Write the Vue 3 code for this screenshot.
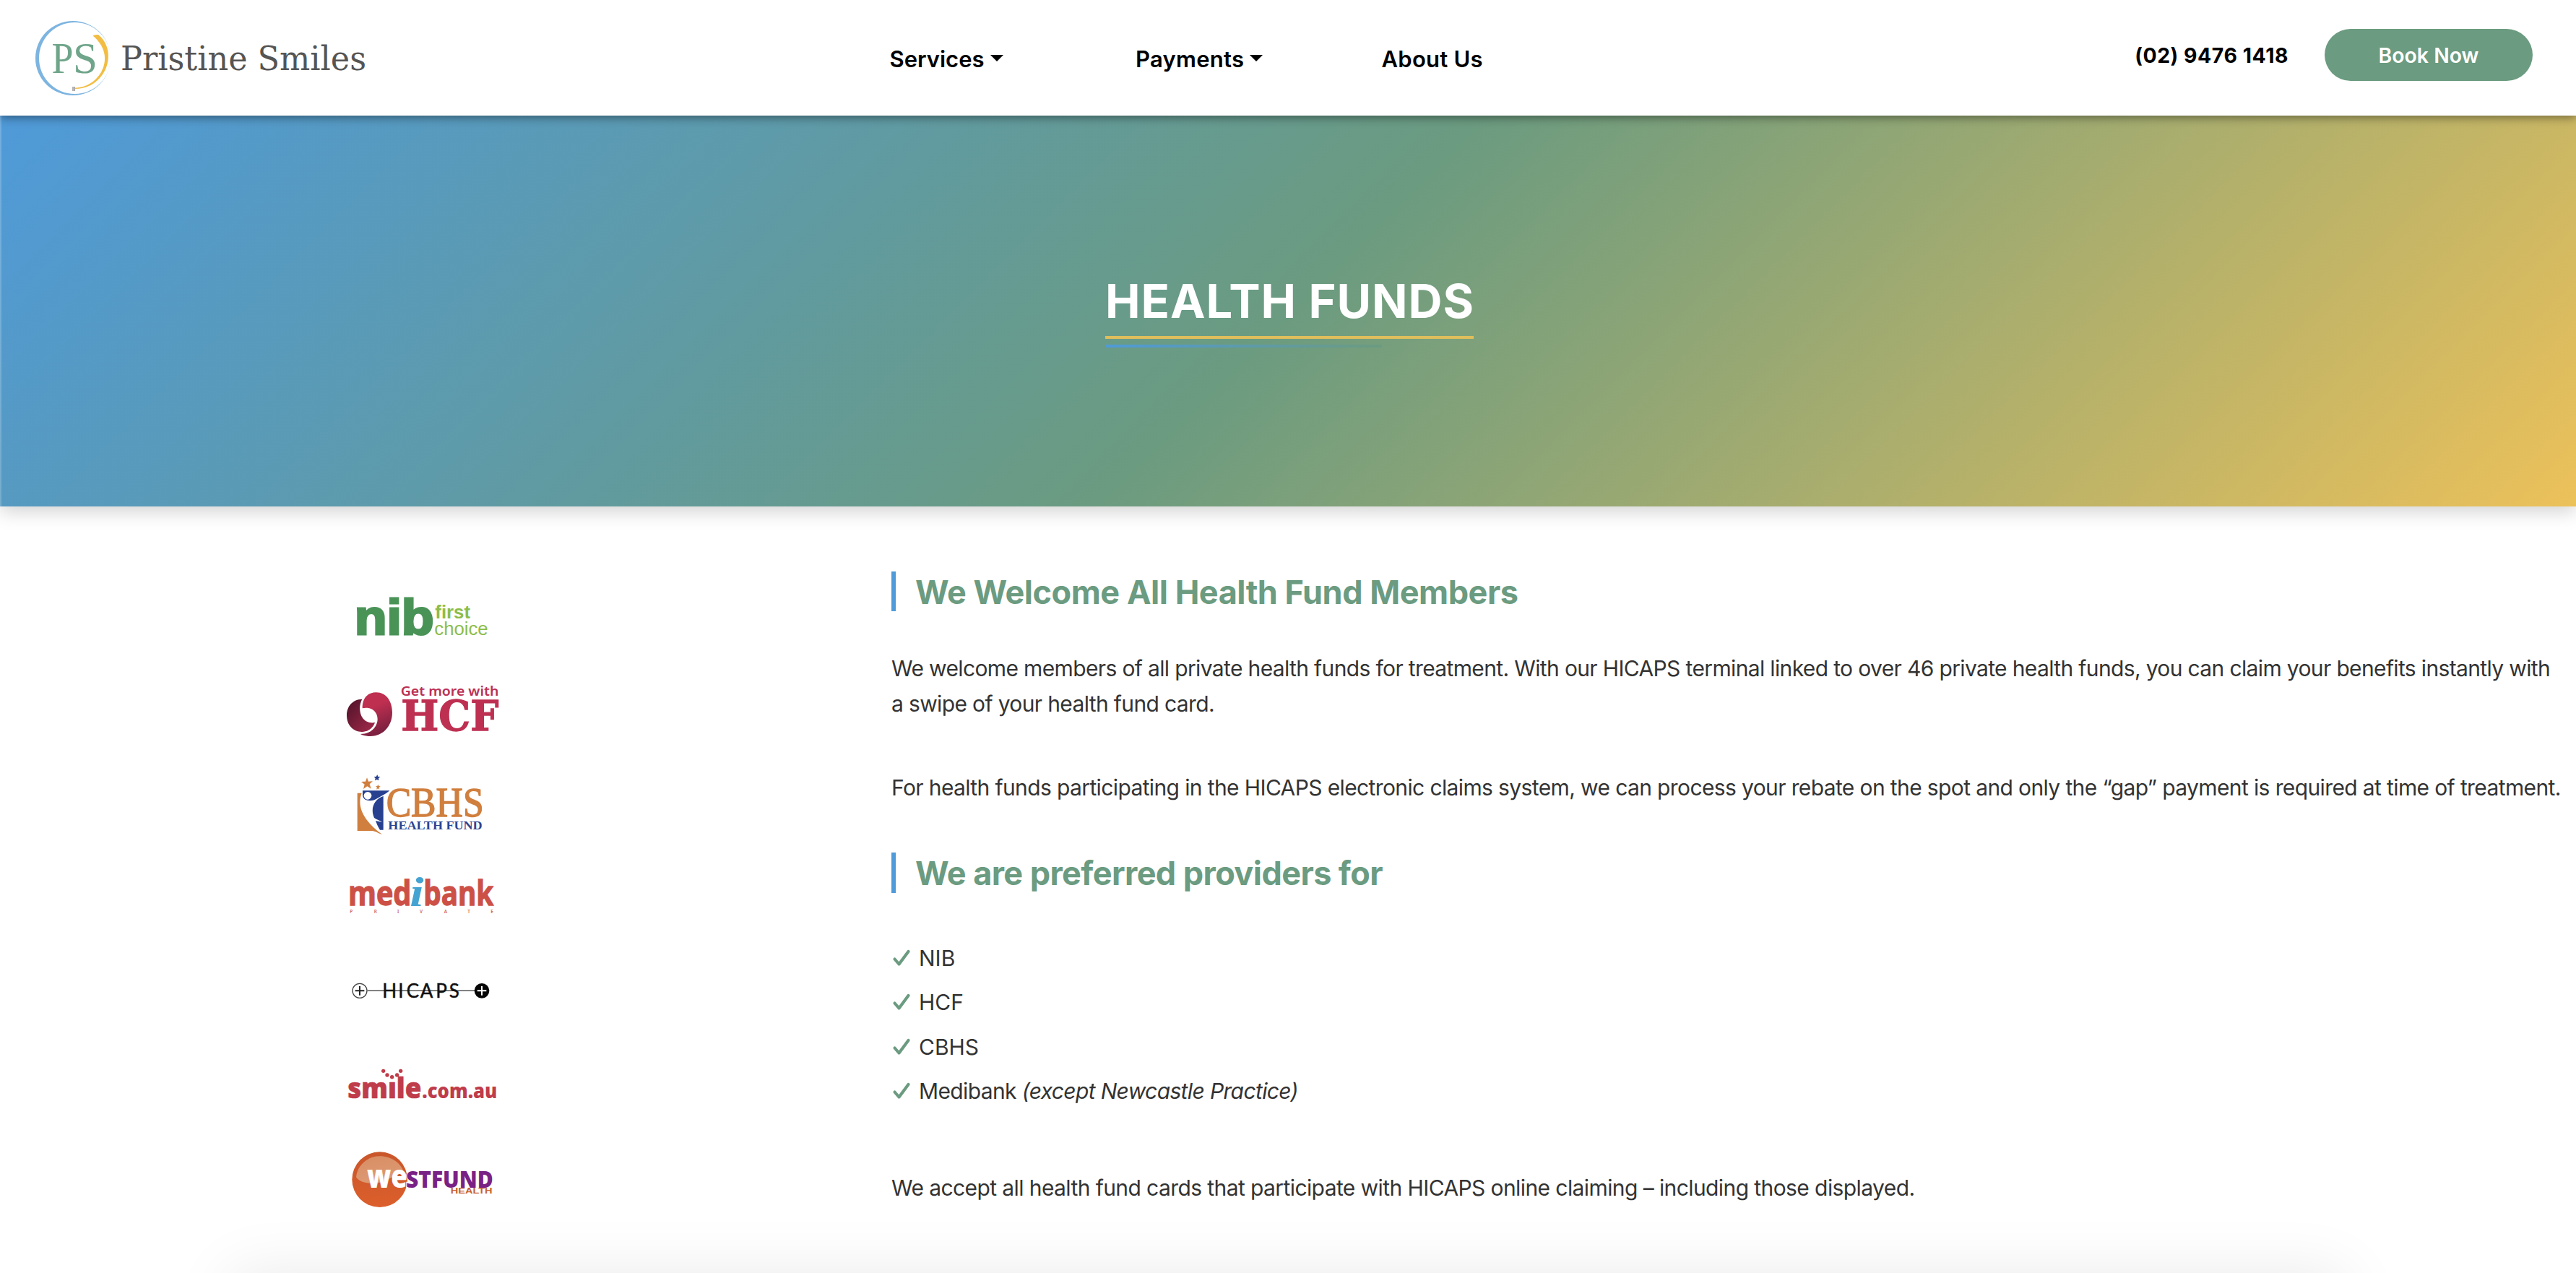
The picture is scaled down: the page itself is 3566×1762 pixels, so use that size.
<script setup>
const providers = [
  { name: 'NIB' },
  { name: 'HCF' },
  { name: 'CBHS' },
  { name: 'Medibank', note: '(except Newcastle Practice)' },
]
</script>

<template>
  <div class="page">
    <header class="header">
      <svg class="brand" width="520" height="160" viewBox="0 0 520 160">
        <path fill="#7db4e0" fill-rule="evenodd" d="M49 80.5a52 51.5 0 1 1 104 0a52 51.5 0 1 1-104 0zM54 80.5a49.5 49.6 0 1 0 99 0a49.5 49.6 0 1 0-99 0z" />
        <path fill="#f2bd42" d="M128.500 49.500Q131 47.500 136 48C154 62 153 88 142 103C132 117 119 123 103.600 123V121.800C121 121 133 112 140 100C150 82 145 63 128.500 49.500z" />
        <path stroke="#999" stroke-width="1.500" d="M101 120v6M103.300 120v6" />
        <text x="71.500" y="101" class="ps" textLength="30" lengthAdjust="spacingAndGlyphs">P</text>
        <text x="101" y="101" class="ps" textLength="34" lengthAdjust="spacingAndGlyphs">S</text>
        <text x="167" y="97" class="wordmark" textLength="340" lengthAdjust="spacingAndGlyphs">Pristine Smiles</text>
      </svg>
      <nav class="nav">
        <a class="item">Services<i class="caret"></i></a>
        <a class="item wide">Payments<i class="caret"></i></a>
        <a class="item wide">About Us</a>
      </nav>
      <div class="actions">
        <span class="phone">(02) 9476 1418</span>
        <a class="book">Book Now</a>
      </div>
    </header>

    <section class="hero">
      <h1 class="title">HEALTH FUNDS</h1>
    </section>

    <main class="main">
      <aside class="funds">
        <svg width="260" height="130" viewBox="0 0 780 390">
          <text x="92" y="235" class="nib" textLength="330" lengthAdjust="spacingAndGlyphs">nib</text>
          <text x="427" y="167" class="nib-first" textLength="146" lengthAdjust="spacingAndGlyphs">first</text>
          <text x="424" y="237" class="nib-choice" textLength="223" lengthAdjust="spacingAndGlyphs">choice</text>
        </svg>
        <svg width="260" height="120" viewBox="0 390 780 360">
          <defs>
            <linearGradient id="hcfDark" x1="0" y1="0" x2="1" y2="1"><stop offset="0" stop-color="#4d1228" /><stop offset="1" stop-color="#a52a4c" /></linearGradient>
            <linearGradient id="hcfRed" x1="0" y1="0" x2="0.300" y2="1"><stop offset="0.400" stop-color="#bf2f50" /><stop offset="1" stop-color="#7d2040" /></linearGradient>
          </defs>
          <path fill="url(#hcfDark)" d="M124 503C85 504 60 532 60 571C60 612 88 640 124 639C150 638 170 622 177 600C150 606 122 590 116 557C112 536 116 518 124 503z" />
          <path fill="url(#hcfRed)" d="M125 541C124 500 146 475 182 475C224 475 249 512 249 558C249 614 212 657 157 657C142 657 128 654 117 648C152 648 180 628 187 596C193 562 168 532 125 541z" />
          <text x="284" y="490" class="hcf-tag" textLength="407" lengthAdjust="spacingAndGlyphs">Get more with</text>
          <text x="286" y="634" class="hcf" textLength="405" lengthAdjust="spacingAndGlyphs">HCF</text>
        </svg>
        <svg width="260" height="140" viewBox="0 0 780 420">
          <path fill="#d07f3e" d="M144 79l6 16 18-1-13 12 6 19-16-10-16 11 5-19-14-11 18-1zM190 107l3 7 7 1-6 5 2 8-6-4-7 4 3-8-6-5 7-1zM104 143H122C104 190 118 250 207 315C188 309 180 301 165 300H104z" />
          <path fill="#27408f" d="M187 67l3 8 9 1-7 6 1 9-8-4-8 4 2-9-6-6 9-1zM126 133H238C222 148 198 158 182 168C160 180 128 176 126 152zM212 156V296H198C190 284 184 270 180 258L207 264C196 256 182 252 174 246C156 204 176 168 212 156z" />
          <circle cx="147" cy="154" r="16" fill="#fff" />
          <text x="224" y="241" class="cbhs" textLength="405" lengthAdjust="spacingAndGlyphs">CBHS</text>
          <text x="232" y="294" class="cbhs-sub" textLength="391" lengthAdjust="spacingAndGlyphs">HEALTH FUND</text>
        </svg>
        <svg width="260" height="140" viewBox="0 420 780 420">
          <text x="66" y="608" class="medi" textLength="262" lengthAdjust="spacingAndGlyphs">med</text>
          <text x="322" y="611" class="medi-i" textLength="58" lengthAdjust="spacingAndGlyphs">i</text>
          <text x="379" y="608" class="medi" textLength="290" lengthAdjust="spacingAndGlyphs">bank</text>
          <text x="73 173 270 363 464 562 658" y="641" class="medi-sub">PRIVATE</text>
        </svg>
        <svg width="260" height="130" viewBox="0 0 780 390">
          <path stroke="#333" stroke-width="4" d="M146 124H592" />
          <circle cx="114" cy="124" r="30" fill="#fff" stroke="#444" stroke-width="4" />
          <path stroke="#222" stroke-width="6" d="M95 124H133M114 105V143" />
          <circle cx="621" cy="124" r="31" fill="#050505" />
          <path stroke="#fff" stroke-width="6" d="M602 124H640M621 105V143" />
          <text x="208 274 308 365 430 485" y="153" class="hicaps">HICAPS</text>
        </svg>
        <svg width="260" height="100" viewBox="0 390 780 300">
          <g fill="#bf3c4a"><circle cx="212" cy="457" r="8" /><circle cx="228" cy="474" r="8" /><circle cx="248" cy="482" r="8" /><circle cx="269" cy="474" r="8" /><circle cx="284" cy="457" r="8" /></g>
          <text x="64" y="569" class="smile" textLength="306" lengthAdjust="spacingAndGlyphs">smıle</text>
          <text x="373" y="569" class="smile-dom" textLength="312" lengthAdjust="spacingAndGlyphs">.com.au</text>
        </svg>
        <svg width="260" height="140" viewBox="0 0 780 420">
          <defs>
            <linearGradient id="wfBall" x1="0" y1="0" x2="0" y2="1"><stop offset="0" stop-color="#c9562a" /><stop offset="1" stop-color="#dc5f2c" /></linearGradient>
            <linearGradient id="wfShine" x1="0" y1="0" x2="0.300" y2="1"><stop offset="0" stop-color="#d88d63" /><stop offset="1" stop-color="#dd9a74" /></linearGradient>
          </defs>
          <circle cx="197" cy="218" r="115" fill="url(#wfBall)" />
          <path fill="url(#wfShine)" d="M99 208C104 158 146 121 197 121C246 121 286 150 298 190C262 196 240 216 205 228C165 240 112 232 99 208z" />
          <text x="306" y="252" class="wf" textLength="362" lengthAdjust="spacingAndGlyphs">STFUND</text>
          <text x="144" y="252" class="wf-we" textLength="168" lengthAdjust="spacingAndGlyphs">we</text>
          <text x="491" y="277" class="wf-sub" textLength="174" lengthAdjust="spacingAndGlyphs">HEALTH</text>
        </svg>
      </aside>

      <article class="article">
        <h2 class="h2">We Welcome All Health Fund Members</h2>
        <p class="p p1">We welcome members of all private health funds for treatment. With our HICAPS terminal linked to over 46 private health funds, you can claim your benefits instantly with<br />a swipe of your health fund card.</p>
        <p class="p p2">For health funds participating in the HICAPS electronic claims system, we can process your rebate on the spot and only the “gap” payment is required at time of treatment.</p>
        <h2 class="h2 second">We are preferred providers for</h2>
        <ul class="list">
          <li v-for="p in providers" :key="p.name" :class="{ noted: p.note }">
            <svg class="check" width="26" height="26" viewBox="0 0 26 26"><path d="M3.500 14.500L9.500 21.500L22.500 4" /></svg>
            <span>{{ p.name }}<em v-if="p.note">&nbsp;{{ p.note }}</em></span>
          </li>
        </ul>
        <p class="p p3">We accept all health fund cards that participate with HICAPS online claiming – including those displayed.</p>
      </article>
    </main>
    <div class="next"></div>
  </div>
</template>

<style>
html,
body {
  margin: 0;
  overflow: hidden;
  background: #fff;
}
</style>

<style scoped>
.page {
  width: 3566px;
  height: 1762px;
  overflow: hidden;
  display: flex;
  flex-direction: column;
  background: #fff;
  font-family: Inter, 'Liberation Sans', sans-serif;
  color: #333;
}
.header {
  flex: none;
  height: 160px;
  display: flex;
  position: relative;
  z-index: 2;
  background: #fff;
  box-shadow: 0 3px 12px rgba(0, 0, 0, 0.42);
}
.brand {
  flex: none;
}
.ps {
  font: 61px 'Liberation Serif', serif;
  fill: #6fa58a;
}
.wordmark {
  font: 46px 'DejaVu Serif Condensed', 'DejaVu Serif', serif;
  font-stretch: condensed;
  fill: #555;
}
.nav {
  display: flex;
  margin: 1px 0 0 711.500px;
  height: 160px;
  align-items: center;
  color: #000;
  font-size: 31px;
  font-weight: 600;
}
.item {
  width: 340.500px;
  display: flex;
  align-items: center;
}
.wide {
  letter-spacing: 0.25px;
}
.caret {
  margin-left: 8px;
  margin-top: -2px;
  border: 9px solid transparent;
  border-top-color: #000;
  border-bottom: 0;
}
.actions {
  display: flex;
  align-items: center;
  margin: 40px 60px 0 auto;
  height: 72px;
  font-size: 28.400px;
  font-weight: 600;
  color: #000;
}
.phone {
  font-weight: 700;
  letter-spacing: 0.550px;
}
.book {
  margin-left: 50px;
  width: 288px;
  height: 72px;
  border-radius: 36px;
  background: #6b9b80;
  color: #fff;
  display: flex;
  align-items: center;
  justify-content: center;
}
.hero {
  flex: none;
  height: 541px;
  box-sizing: border-box;
  border-left: 2px solid rgba(255, 255, 255, 0.2);
  background: linear-gradient(135deg, #4f9ad9 0%, #6b9b80 50%, #ecc15a 100%) border-box;
  box-shadow: 0 8px 24px rgba(0, 0, 0, 0.17);
  display: flex;
  justify-content: center;
}
.title {
  margin: 216px 0 0;
  width: 510px;
  height: 89px;
  border-bottom: 4px solid #dfbe5c;
  color: #fff;
  font-size: 65px;
  font-weight: 700;
  line-height: 82px;
  letter-spacing: 0.950px;
  white-space: nowrap;
  position: relative;
  left: 1px;
}
.title::after {
  content: '';
  position: absolute;
  left: 0;
  top: 101px;
  width: 75%;
  height: 4px;
  background: linear-gradient(90deg, #4f9ad9, #6b9b80);
}
.main {
  flex: none;
  height: 1061px;
  display: flex;
}
.funds {
  width: 260px;
  flex: none;
  margin: 99px 514px 0 460px;
  display: flex;
  flex-direction: column;
}
.funds svg {
  display: block;
}
.nib {
  font: bold 206px 'Liberation Sans', sans-serif;
  fill: #4a9357;
  stroke: #4a9357;
  stroke-width: 9;
}
.nib-first {
  font: bold 78px 'Liberation Sans', sans-serif;
  fill: #8cbd4a;
}
.nib-choice {
  font: 78px 'Liberation Sans', sans-serif;
  fill: #8cbd4a;
}
.hcf-tag {
  font: 600 56px 'Noto Sans', sans-serif;
  fill: #bb3054;
}
.hcf {
  font: bold 172px 'DejaVu Serif', serif;
  fill: #be3052;
  stroke: #be3052;
  stroke-width: 4;
}
.cbhs {
  font: 168px 'Liberation Serif', serif;
  fill: #d07f3e;
  stroke: #d07f3e;
  stroke-width: 4;
}
.cbhs-sub {
  font: bold 51px 'Liberation Serif', serif;
  fill: #2b4391;
}
.medi {
  font: bold 142px 'Open Sans', sans-serif;
  fill: #cd5046;
  stroke: #cd5046;
  stroke-width: 4;
}
.medi-i {
  font: italic bold 168px 'Liberation Serif', serif;
  fill: #45a3d2;
}
.medi-sub {
  font: 600 19px 'Noto Sans', sans-serif;
  fill: #cf6a62;
}
.hicaps {
  font: 78px Lato, sans-serif;
  fill: #111;
  stroke: #111;
  stroke-width: 1.500;
}
.smile {
  font: 800 116px 'Open Sans', sans-serif;
  fill: #bf3c4a;
  stroke: #bf3c4a;
  stroke-width: 2;
  stroke-linejoin: round;
}
.smile-dom {
  font: 800 82px 'Open Sans', sans-serif;
  fill: #bf3c4a;
}
.wf {
  font: 800 97px 'Open Sans', sans-serif;
  fill: #7a2185;
  stroke: #fff;
  stroke-width: 6;
  paint-order: stroke;
}
.wf-we {
  font: 800 130px 'Open Sans', sans-serif;
  fill: #fff;
}
.wf-sub {
  font: bold 31px 'Liberation Sans', sans-serif;
  fill: #c8622f;
}
.article {
  width: 2332px;
  display: flex;
  flex-direction: column;
  padding-top: 90px;
}
.h2 {
  margin: 0;
  flex: none;
  height: 55px;
  border-left: 6px solid #4f9ad9;
  padding-left: 27px;
  color: #6b9b80;
  font-size: 45px;
  font-weight: 700;
  letter-spacing: -0.460px;
  line-height: 57px;
  white-space: nowrap;
}
.p {
  margin: 0;
  font-size: 30px;
  line-height: 49px;
  white-space: nowrap;
}
.p1 {
  margin-top: 55px;
  letter-spacing: -0.640px;
}
.p2 {
  margin-top: 67px;
  letter-spacing: -0.620px;
}
.second {
  margin-top: 65px;
  height: 56px;
  letter-spacing: -0.580px;
}
.list {
  list-style: none;
  margin: 59px 0 0;
  padding: 0;
  font-size: 30px;
}
.list li {
  display: flex;
  align-items: center;
  height: 61.500px;
}
.list .noted {
  letter-spacing: -0.630px;
}
.check {
  margin: 0 11px 0 1px;
  fill: none;
  stroke: #6b9b80;
  stroke-width: 4.200;
  stroke-linecap: round;
  stroke-linejoin: round;
}
.p3 {
  margin-top: 79px;
  letter-spacing: -0.590px;
}
.next {
  flex: none;
  height: 400px;
  margin: 0 320px;
  box-shadow: 0 0 80px rgba(0, 0, 0, 0.085);
}
</style>
